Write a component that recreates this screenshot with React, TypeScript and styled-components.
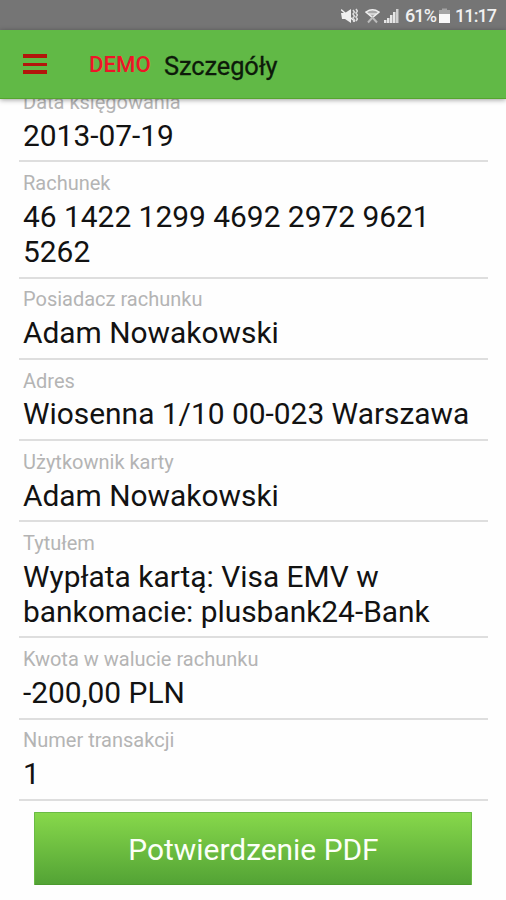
import React from "react";
import styled, { createGlobalStyle } from "styled-components";

const GlobalStyle = createGlobalStyle`
  html, body { margin: 0; padding: 0; }
  body { background: #fefefe; font-family: Roboto, "Noto Sans", sans-serif; }
`;

const Screen = styled.div`
  width: 506px;
  height: 900px;
  display: flex;
  flex-direction: column;
  overflow: hidden;
  background: #fefefe;
`;

const StatusBar = styled.div`
  flex: none;
  box-sizing: border-box;
  height: 30px;
  padding: 2px 10px 0 0;
  display: flex;
  align-items: center;
  justify-content: flex-end;
  background: #757575;
  color: #f0f0f0;
`;

const StatusText = styled.span<{ $width: number }>`
  width: ${(p) => p.$width}px;
  font-size: 18px;
  line-height: 28px;
  font-weight: 500;
  letter-spacing: -0.9px;
  white-space: nowrap;
`;

const StatusIcon = styled.svg<{ $gap: number }>`
  display: block;
  flex: none;
  margin-right: ${(p) => p.$gap}px;
`;

const AppBar = styled.header`
  flex: none;
  z-index: 1;
  box-sizing: border-box;
  height: 69px;
  padding-left: 23px;
  display: flex;
  align-items: center;
  background: #61b946;
  border-bottom: 1px solid #55a52e;
  box-shadow: 0 1px 5px rgba(0, 0, 0, 0.38);
`;

const MenuButton = styled.button`
  display: flex;
  flex-direction: column;
  justify-content: space-between;
  width: 24px;
  height: 20px;
  margin: 0 42px 0 0;
  padding: 0;
  border: 0;
  background: none;
`;

const MenuBar = styled.span<{ $thickness: number }>`
  height: ${(p) => p.$thickness}px;
  background: #b3150b;
`;

const DemoTag = styled.span`
  width: 75px;
  padding-bottom: 1px;
  font-size: 22.2px;
  line-height: 26px;
  font-weight: 500;
  color: #ee1528;
`;

const Title = styled.h1`
  margin: 0;
  padding-top: 4px;
  font-size: 25.4px;
  line-height: 30px;
  font-weight: 400;
  letter-spacing: -0.1px;
  -webkit-text-stroke: 0.3px #0d1a0a;
  color: #0d1a0a;
`;

const Scroller = styled.main`
  flex: 1;
  min-height: 0;
  overflow: hidden;
  padding: 0 18px 0 19px;
`;

const Details = styled.dl`
  margin: -17.9px 0 0;
`;

const Field = styled.div`
  padding: 9.8px 4px 7.3px;
  border-bottom: 2px solid #dedede;
`;

const Label = styled.dt`
  font-size: 20px;
  line-height: 23.4px;
  color: #b4b4b4;
`;

const Value = styled.dd`
  margin: 3.5px 0 0;
  font-size: 29.9px;
  line-height: 35.15px;
  color: #121212;
  white-space: pre-line;
`;

const PdfButton = styled.button`
  display: block;
  box-sizing: border-box;
  width: 438px;
  height: 73px;
  margin: 11px 0 0 15px;
  padding: 3px 0 0 1px;
  border: 1px solid #6abb45;
  border-bottom-color: #4c9a2e;
  border-radius: 1px;
  background: linear-gradient(#87d84b, #53a335);
  color: #fcfff8;
  font-family: inherit;
  font-size: 29.9px;
  line-height: 36px;
`;

const fields = [
  { label: "Data księgowania", value: "2013-07-19" },
  { label: "Rachunek", value: "46 1422 1299 4692 2972 9621\n5262" },
  { label: "Posiadacz rachunku", value: "Adam Nowakowski" },
  { label: "Adres", value: "Wiosenna 1/10 00-023 Warszawa" },
  { label: "Użytkownik karty", value: "Adam Nowakowski" },
  { label: "Tytułem", value: "Wypłata kartą: Visa EMV w\nbankomacie: plusbank24-Bank" },
  { label: "Kwota w walucie rachunku", value: "-200,00 PLN" },
  { label: "Numer transakcji", value: "1" },
];

const MuteIcon = () => (
  <StatusIcon $gap={7} width="17" height="16" viewBox="0 0 17 16">
    <path d="M0 5h4l6-4v14l-6-4H1z" fill="#f0f0f0" />
    <path d="M0 1.500l14 12" stroke="#f0f0f0" strokeWidth="1.4" />
    <path d="M12 2l1.400 2L12 6l1.400 2L12 10l1.400 2-1 2M15 1l1.400 2L15 5l1.400 2L15 9l1.400 2L15 13" fill="none" stroke="#dddddd" strokeWidth="1.5" />
  </StatusIcon>
);

const WifiIcon = () => (
  <StatusIcon $gap={4} width="15" height="16" viewBox="0 0 15 16">
    <path d="M1 4Q7.500 -0.500 14 4L7.500 10Z" fill="#a9a9a9" />
    <path d="M1 4Q7.500 -0.500 14 4L7.500 9.500Z" fill="none" stroke="#efefef" strokeWidth="1.5" />
    <path d="M4 6h7" stroke="#efefef" strokeWidth="1.2" />
    <path d="M3 14.500l4.500-5 4.500 5" fill="none" stroke="#bcbcbc" strokeWidth="2" />
  </StatusIcon>
);

const SignalIcon = () => (
  <StatusIcon $gap={6} width="15" height="16" viewBox="0 0 15 16">
    <path d="M0 12h2.500v3H0zM3 10h2.500v5H3zM6 7h2.500v8H6zM9 4h2.500v11H9z" fill="#e6e6e6" />
    <path d="M12 1h2.500v14H12z" fill="#d0d0d0" />
  </StatusIcon>
);

const BatteryIcon = () => (
  <StatusIcon $gap={5} width="11" height="16" viewBox="0 0 11 16">
    <path d="M3 0.500h5v1.500h3v4H0V2h3z" fill="#a4a4a4" />
    <path d="M0 6h11v9H0z" fill="#f8f8f8" />
  </StatusIcon>
);

export default function App() {
  return (
    <Screen>
      <GlobalStyle />
      <StatusBar>
        <MuteIcon />
        <WifiIcon />
        <SignalIcon />
        <StatusText $width={34}>61%</StatusText>
        <BatteryIcon />
        <StatusText $width={41}>11:17</StatusText>
      </StatusBar>
      <AppBar>
        <MenuButton aria-label="Menu">
          <MenuBar $thickness={4} />
          <MenuBar $thickness={3} />
          <MenuBar $thickness={4} />
        </MenuButton>
        <DemoTag>DEMO</DemoTag>
        <Title>Szczegóły</Title>
      </AppBar>
      <Scroller>
        <Details>
          {fields.map((field) => (
            <Field key={field.label}>
              <Label>{field.label}</Label>
              <Value>{field.value}</Value>
            </Field>
          ))}
        </Details>
        <PdfButton>Potwierdzenie PDF</PdfButton>
      </Scroller>
    </Screen>
  );
}
